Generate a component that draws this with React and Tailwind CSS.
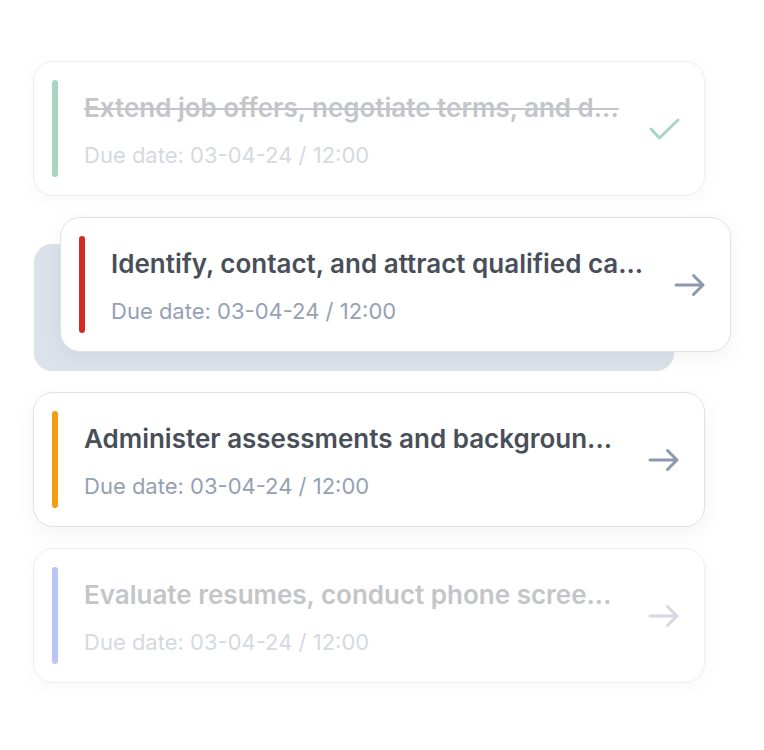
const font = { fontFamily: 'Inter, "Noto Sans", sans-serif' }

const TASKS = [
  { id: 1, title: 'Extend job offers, negotiate terms, and d...', bar: 'bg-[#a9d4bf]', state: 'done' },
  { id: 2, title: 'Identify, contact, and attract qualified ca...', bar: 'bg-[#d52b22]', state: 'dragging' },
  { id: 3, title: 'Administer assessments and backgroun...', bar: 'bg-[#f29d12]', state: 'active' },
  { id: 4, title: 'Evaluate resumes, conduct phone scree...', bar: 'bg-[#b9c6f4]', state: 'faded' },
]

export default function App() {
  return (
    <div className="min-h-screen bg-white" style={font}>
      <div className="w-[672px] ml-[33px] pt-[61px] flex flex-col gap-[21px]">
        <TaskCard task={TASKS[0]} />

        {/* drop slot with card being dragged */}
        <div className="relative h-[154px]">
          <div className="mt-[27px] ml-[1px] w-[640px] h-[127px] rounded-[18px] bg-[#dce2ea]" />
          <div className="absolute left-[27px] top-0 w-[671px]">
            <TaskCard task={TASKS[1]} />
          </div>
        </div>

        <TaskCard task={TASKS[2]} />
        <TaskCard task={TASKS[3]} />
      </div>
    </div>
  )
}

function TaskCard({ task }) {
  const done = task.state === 'done'
  const faded = task.state === 'done' || task.state === 'faded'

  return (
    <div
      className={`h-[135px] flex items-stretch gap-[26px] pl-[18px] pr-[24px] py-[18px] rounded-[20px] bg-white border
        ${faded ? 'border-[#eceef2] shadow-[0_4px_18px_rgba(15,23,42,0.03)]' : 'border-[#dde2ea] shadow-[0_6px_20px_rgba(15,23,42,0.05)]'}`}
    >
      <div className={`w-[6px] rounded-full flex-shrink-0 ${task.bar}`} />
      <div className="flex-1 min-w-0 flex flex-col justify-center pt-[4px]">
        <p
          className={`truncate text-[26px] leading-[32px] font-semibold
            ${done ? 'line-through text-[#c3c5c9] decoration-[#c3c5c9] decoration-[2px]' : faded ? 'text-[#c3c5c9]' : 'text-[#484f59]'}`}
        >
          {task.title}
        </p>
        <p className={`mt-[17px] text-[22px] leading-[28px] ${faded ? 'text-[#d6d9df]' : 'text-[#95a1b4]'}`}>
          Due date: 03-04-24 / 12:00
        </p>
      </div>
      <div className="flex items-center flex-shrink-0">
        {done ? (
          <IconCheck className="w-[32px] h-[24px] text-[#a8d6c5]" />
        ) : (
          <IconArrow className={`w-[32px] h-[24px] ${faded ? 'text-[#d3d8e1]' : 'text-[#8b99ae]'}`} />
        )}
      </div>
    </div>
  )
}

function IconArrow({ className }) {
  return (
    <svg className={className} viewBox="0 0 32 24" fill="none" stroke="currentColor" strokeWidth={3} strokeLinecap="round" strokeLinejoin="round">
      <path d="M2 12h27M19.5 2.5 29 12l-9.5 9.5" />
    </svg>
  )
}

function IconCheck({ className }) {
  return (
    <svg className={className} viewBox="0 0 32 24" fill="none" stroke="currentColor" strokeWidth={3} strokeLinecap="round" strokeLinejoin="round">
      <path d="M3 12l8.5 9L30 3" />
    </svg>
  )
}
